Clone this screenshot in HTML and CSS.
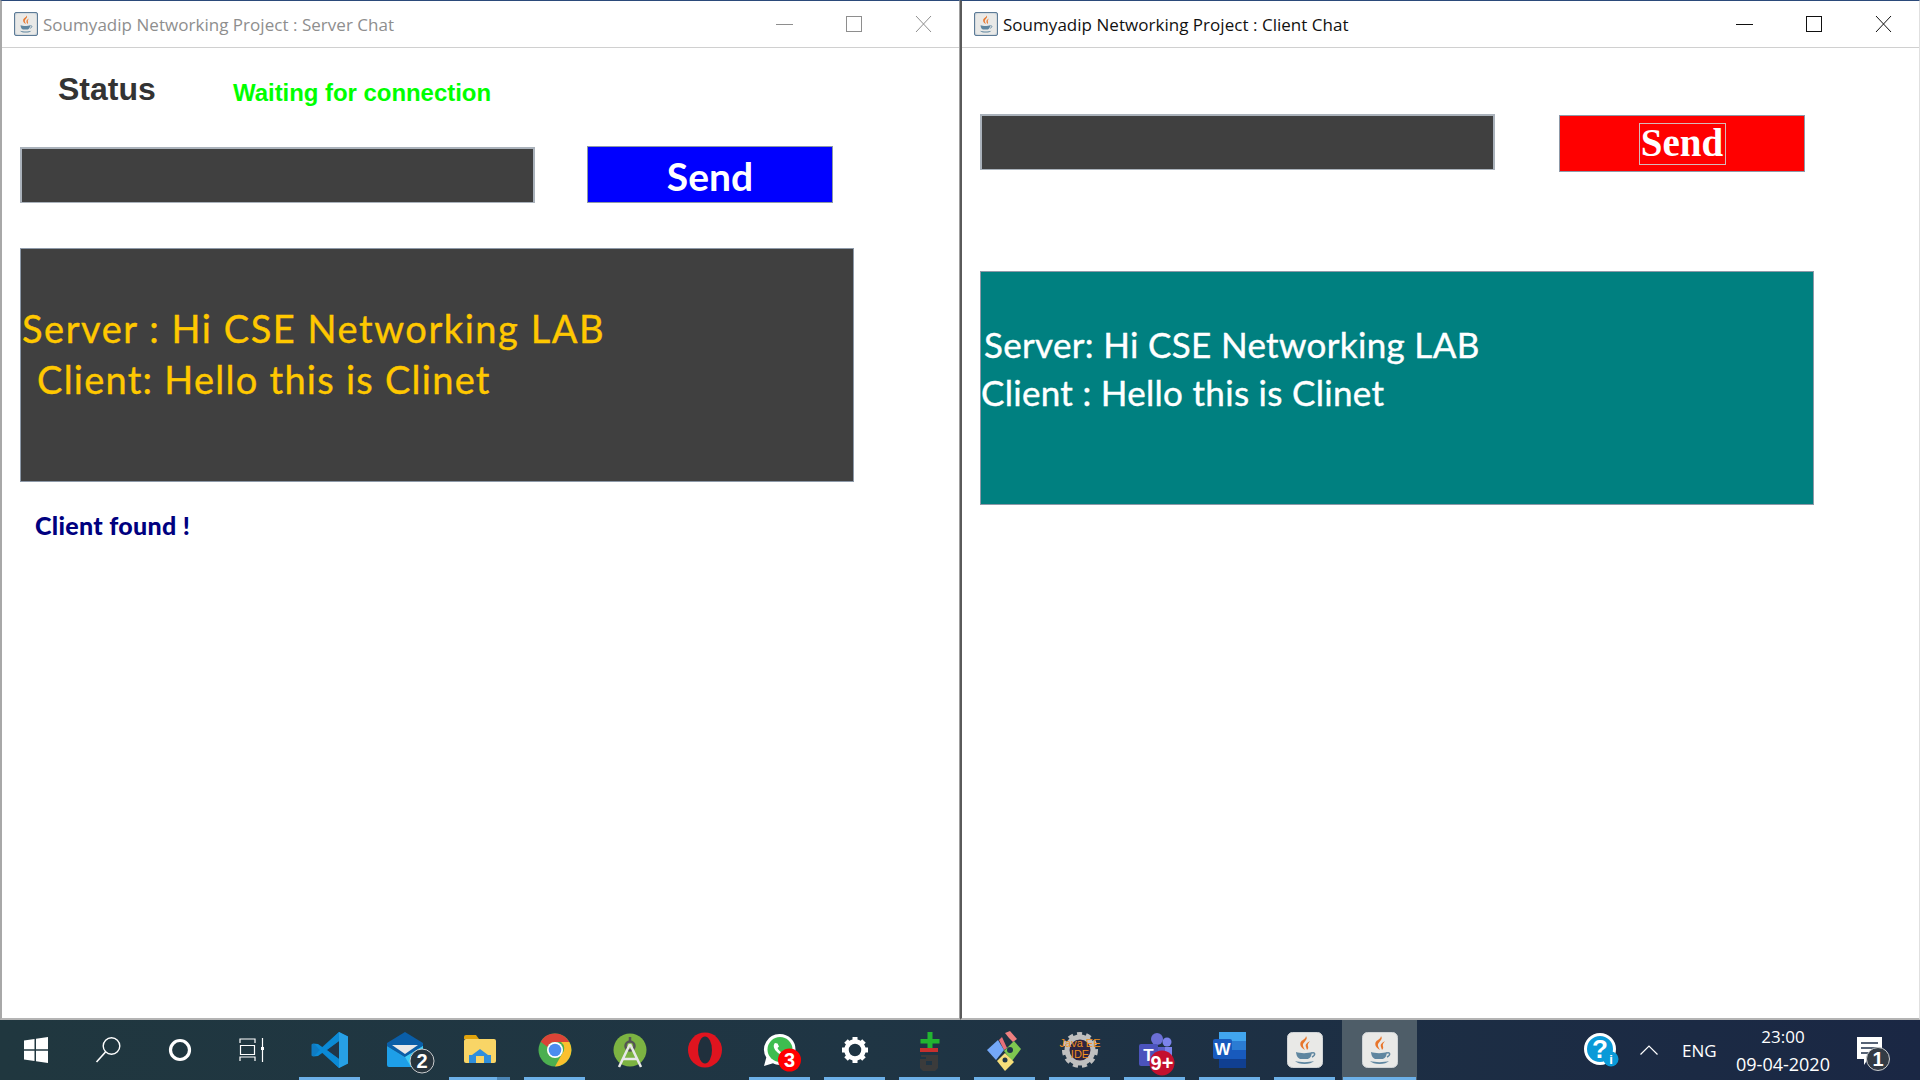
FILE: index.html
```html
<!DOCTYPE html>
<html lang="en">
    <head>
        <title>Soumyadip Networking Project</title>
        <link rel="stylesheet" href="styles.css">
    </head>
    <body>
        <svg class="defs" width="0" height="0">
            <symbol id="java" viewBox="0 0 36 36">
                <rect x="0.5" y="0.5" width="35" height="35" rx="5" fill="#e9e9e7" stroke="#cfd3d6"/>
                <path d="M19 4c3 4-4 6-3 10 .4 1.500 1.500 3 2 4-3-2-5.500-4-4.500-7.500C14.500 8 19 7 19 4z" fill="#e8762c"/>
                <path d="M23 9c-3 2-5 3-4 6 .3 1 .8 2 1 3 2-2 1-3 .8-4.500-.2-1.500 1-3 2.200-4.500z" fill="#e8762c"/>
                <path d="M9 20c4 1.500 12 1.500 16 0v1c-1 4-2 5-4 6h-8c-2-1-3.500-2.500-4-7z" fill="#5f86a0"/>
                <path d="M25 21c3-1 4 2 0 4" fill="none" stroke="#5f86a0" stroke-width="1.500"/>
                <path d="M8 29c5 1.500 14 1.500 19 0-2 2-5 3-9.500 3S10 31 8 29z" fill="#5f86a0"/>
            </symbol>
        </svg>

        <div class="desktop">
            <div class="window server">
                <div class="title-bar">
                    <svg class="title-icon" width="24" height="24"><use href="#java"/></svg>
                    <span class="title-text">Soumyadip Networking Project : Server Chat</span>
                    <div class="window-buttons">
                        <svg width="17" height="16" viewBox="0 0 17 16"><path d="M0 8.500h17" stroke="currentColor"/></svg>
                        <svg width="16" height="16" viewBox="0 0 16 16"><rect x="0.500" y="0.500" width="15" height="15" fill="none" stroke="currentColor"/></svg>
                        <svg width="17" height="16" viewBox="0 0 17 16"><path d="M1 0l15 16M16 0L1 16" stroke="currentColor" fill="none"/></svg>
                    </div>
                </div>
                <div class="status-row">
                    <span class="status-label">Status</span>
                    <span class="status-value">Waiting for connection</span>
                </div>
                <div class="send-row">
                    <div class="message-input"></div>
                    <div class="send-button blue"><span>Send</span></div>
                </div>
                <div class="chat-box dark">
                    <div class="chat-line server-first">Server : Hi CSE Networking LAB</div>
                    <div class="chat-line server-second">Client: Hello this is Clinet</div>
                </div>
                <div class="found">Client found !</div>
            </div>

            <div class="window client">
                <div class="title-bar">
                    <svg class="title-icon" width="24" height="24"><use href="#java"/></svg>
                    <span class="title-text">Soumyadip Networking Project : Client Chat</span>
                    <div class="window-buttons">
                        <svg width="17" height="16" viewBox="0 0 17 16"><path d="M0 8.500h17" stroke="currentColor"/></svg>
                        <svg width="16" height="16" viewBox="0 0 16 16"><rect x="0.500" y="0.500" width="15" height="15" fill="none" stroke="currentColor"/></svg>
                        <svg width="17" height="16" viewBox="0 0 17 16"><path d="M1 0l15 16M16 0L1 16" stroke="currentColor" fill="none"/></svg>
                    </div>
                </div>
                <div class="send-row">
                    <div class="message-input"></div>
                    <div class="send-button red"><span>Send</span></div>
                </div>
                <div class="chat-box teal">
                    <div class="chat-line client-first">Server: Hi CSE Networking LAB</div>
                    <div class="chat-line client-second">Client : Hello this is Clinet</div>
                </div>
            </div>
        </div>

        <div class="taskbar">
            <div class="system-item">
                <svg class="icon" width="48" height="48" viewBox="0 0 48 48"><path d="M12 14.500l10.500-1.500v10.300H12zM24 12.800L36 11v12.300H24zM12 24.700h10.500V35L12 33.500zM24 24.700h12V37l-12-1.800z" fill="#fff"/></svg>
            </div>
            <div class="system-item">
                <svg class="icon" width="48" height="48" viewBox="0 0 48 48"><circle cx="27.500" cy="20" r="8.300" fill="none" stroke="#fff" stroke-width="1.400"/><path d="M21.500 26L12.500 36" stroke="#fff" stroke-width="1.600"/></svg>
            </div>
            <div class="system-item">
                <svg class="icon" width="48" height="48" viewBox="0 0 48 48"><circle cx="24" cy="24" r="9.500" fill="none" stroke="#fff" stroke-width="3.200"/></svg>
            </div>
            <div class="system-item last">
                <svg class="icon" width="48" height="48" viewBox="0 0 48 48"><path d="M12 17v-4h15v4M12 35v-4h15v4M12.500 19.500h14v9h-14zM34.500 12v24" fill="none" stroke="#fff" stroke-width="1.200"/><rect x="33" y="21" width="3" height="3" fill="#fff"/></svg>
            </div>

            <div class="app open">
                <svg class="icon" width="48" height="48" viewBox="0 0 48 48"><path d="M33 6l9 4.500v27L33 42 14 25l-7 5.500-1.500-1V18.500l1.500-1L14 23z" fill="#0f7cc4"/><path d="M33 6l9 4.500v27L33 42z" fill="#27a0e6"/><path d="M33 15L21 24l12 9z" fill="#20364a"/><path d="M33 6v9L12 30l-5 .5 26-24.500z" fill="#0b8ad6"/><path d="M33 42v-9L12 18l-5-.5 26 24.500z" fill="#0b8ad6"/></svg>
            </div>
            <div class="app">
                <svg class="icon" width="48" height="48" viewBox="0 0 48 48"><path d="M6 17L24 6l18 11v3L24 31 6 20z" fill="#0a5ea8"/><path d="M11 19h26l-13 9z" fill="#e8e8e8"/><path d="M6 20l18 11 18-11v19a2 2 0 0 1-2 2H8a2 2 0 0 1-2-2z" fill="#1e9fe8"/><path d="M42 20v19a2 2 0 0 1-2 2H30l-6-10z" fill="#3ecbf5"/><circle cx="41" cy="35" r="12" fill="#27343d" stroke="#c9ccce"/><text class="badge-number" x="41" y="42" font-size="20">2</text></svg>
            </div>
            <div class="app open stacked">
                <svg class="icon" width="48" height="48" viewBox="0 0 48 48"><path d="M8 11a2 2 0 0 1 2-2h10l3 4H8z" fill="#e0a30c"/><rect x="8" y="13" width="32" height="24" rx="2" fill="#f9d566"/><path d="M13 37V29l3 0 8-6 8 6 3 0v8h-7v-7H20v7z" fill="#2f8fdc"/><path d="M20 37V33h8v4z" fill="#f9d566"/></svg>
            </div>
            <div class="app open">
                <svg class="icon" width="48" height="48" viewBox="0 0 48 48"><circle cx="24" cy="24" r="16.500" fill="#4caf50"/><path d="M24 7.500A16.500 16.500 0 0 1 38.300 16H24a8 8 0 0 0-7.500 5L9.700 15.700A16.500 16.500 0 0 1 24 7.500z" fill="#db4437"/><path d="M38.300 16A16.500 16.500 0 0 1 24 40.500L31 28a8 8 0 0 0-1-12z" fill="#fbc02d"/><circle cx="24" cy="24" r="8" fill="#fff"/><circle cx="24" cy="24" r="6.300" fill="#4a8cf0"/></svg>
            </div>
            <div class="app">
                <svg class="icon" width="48" height="48" viewBox="0 0 48 48"><circle cx="24" cy="24" r="16.500" fill="#7cb342"/><circle cx="24" cy="20" r="4.500" fill="none" stroke="#555" stroke-width="2.500"/><path d="M24 11v5" stroke="#555" stroke-width="2.500"/><path d="M24 18L13 41M24 18l11 23M16 33h16" stroke="#e8e8e8" stroke-width="2.500" fill="none"/></svg>
            </div>
            <div class="app">
                <svg class="icon" width="48" height="48" viewBox="0 0 48 48"><ellipse cx="24" cy="24" rx="17" ry="17.500" fill="#e0141f"/><ellipse cx="24" cy="24" rx="7" ry="13.500" fill="#20303d"/></svg>
            </div>
            <div class="app open">
                <svg class="icon" width="48" height="48" viewBox="0 0 48 48"><path d="M24 8a15.500 15.500 0 0 1 0 31c-2.700 0-5-.6-7-1.700L8 40l2.300-8.500A15.500 15.500 0 0 1 24 8z" fill="#fff"/><circle cx="24" cy="23.500" r="12.500" fill="#3ebd50"/><path d="M19 17c-2 2-1.500 5 1 8s6 5 8.500 4.500c1.500-.3 2.500-2 2-3l-3-1.500-1.500 1.500c-2-.7-4-3-4.500-4.500l1.500-1.500-1.500-3z" fill="#fff"/><circle cx="33.500" cy="34" r="11.500" fill="#f00"/><text class="badge-number" x="33.500" y="41" font-size="20">3</text></svg>
            </div>
            <div class="app open">
                <svg class="icon" width="48" height="48" viewBox="0 0 48 48"><circle cx="24" cy="24" r="8.500" fill="none" stroke="#fff" stroke-width="4.500"/><g stroke="#fff" stroke-width="5"><path d="M24 11v4M24 33v4M11 24h4M33 24h4M15 15l2.500 2.500M30.500 30.500L33 33M33 15l-2.500 2.500M17.500 30.500L15 33"/></g></svg>
            </div>
            <div class="app open">
                <svg class="icon" width="48" height="48" viewBox="0 0 48 48"><path d="M21.500 6h5v7h7v4.500h-7V24h-5v-6.500h-7V13h7z" fill="#22b530"/><rect x="14" y="22" width="18" height="4" fill="#c8302e"/><path d="M15 29h17v13l-3 3H17l-3-3v-9h6v6h6v-4h-6v-4h-5z" fill="#3b3b3b"/></svg>
            </div>
            <div class="app open">
                <svg class="icon" width="48" height="48" viewBox="0 0 48 48"><path d="M24 7l5-2 7 8-4 3-4-4z" fill="#f08080"/><path d="M18 14l3-3 5 11-3 2z" fill="#e8707a"/><path d="M23 25l10-10 7 8-9 12z" fill="#7ec850"/><path d="M17 14l6 10-8 10-9-10z" fill="#74a8f8"/><path d="M16 35l8-8 9 9-9 9z" fill="#f6de7a"/><circle cx="29" cy="24" r="3" fill="#20364a"/><circle cx="24" cy="34" r="2.500" fill="#20364a"/></svg>
            </div>
            <div class="app open">
                <svg class="icon" width="48" height="48" viewBox="0 0 48 48"><circle cx="24" cy="24" r="13" fill="#2e2440" stroke="#bfbfbf" stroke-width="5"/><circle cx="24" cy="24" r="16" fill="none" stroke="#bfbfbf" stroke-width="4" stroke-dasharray="5 4"/><text class="java-ee" x="24" y="21">Java EE</text><text class="java-ee" x="24" y="32">IDE</text></svg>
            </div>
            <div class="app open">
                <svg class="icon" width="48" height="48" viewBox="0 0 48 48"><circle cx="26" cy="13" r="6" fill="#6b6fd6"/><circle cx="36" cy="16" r="4.500" fill="#7b83eb"/><path d="M18 21h16v14H18z" fill="#5a5fc8"/><path d="M34 21h7v11h-7z" fill="#7b83eb"/><rect x="8" y="18" width="19" height="22" rx="2" fill="#4b53bc"/><text class="teams-letter" x="17.500" y="35">T</text><circle cx="31" cy="37" r="12.500" fill="#c4102e"/><text class="badge-number" x="31" y="44" font-size="20">9+</text></svg>
            </div>
            <div class="app open">
                <svg class="icon" width="48" height="48" viewBox="0 0 48 48"><rect x="13" y="6" width="27" height="36" rx="2" fill="#2b7cd3"/><rect x="13" y="6" width="27" height="9" fill="#41a5ee"/><rect x="13" y="24" width="27" height="9" fill="#185abd"/><rect x="13" y="33" width="27" height="9" fill="#103f91"/><rect x="7" y="13" width="19" height="20" rx="2" fill="#185abd"/><text class="word-letter" x="16.500" y="29">W</text></svg>
            </div>
            <div class="app open">
                <svg class="icon" width="36" height="36"><use href="#java"/></svg>
            </div>
            <div class="app open active">
                <svg class="icon" width="36" height="36"><use href="#java"/></svg>
            </div>

            <div class="tray">
                <svg class="icon tray-help" width="48" height="48" viewBox="0 0 48 48"><circle cx="22" cy="23" r="14.500" fill="#0a9ad8" stroke="#fff" stroke-width="3"/><text class="help-mark" x="22" y="32">?</text><circle cx="33" cy="33" r="7.500" fill="#0a9ad8"/><text class="help-info" x="33" y="38">i</text></svg>
                <svg class="tray-chevron" width="18" height="10" viewBox="0 0 18 10"><path d="M0.500 9.500L9 1l8.500 8.500" fill="none" stroke="#fff" stroke-width="1.200"/></svg>
                <span class="tray-lang">ENG</span>
                <div class="clock">
                    <span>23:00</span>
                    <span class="clock-date">09-04-2020</span>
                </div>
                <svg class="icon tray-note" width="48" height="48" viewBox="0 0 48 48"><path d="M13 11h25v22H24l-4 6v-6h-7z" fill="#fff"/><path d="M17 17h17M17 22h17M17 27h12" stroke="#20304a" stroke-width="1.500"/><circle cx="34" cy="33" r="11.500" fill="#333b45" stroke="#c9ccce"/><text class="badge-number" x="34" y="40" font-size="20">1</text></svg>
            </div>
        </div>
    </body>
</html>
```

FILE: styles.css
```css
html, body {
    margin: 0;
    padding: 0;
    height: 100%;
    overflow: hidden;
}
body {
    display: flex;
    flex-direction: column;
    width: 1920px;
    height: 1080px;
    background-color: #fff;
    font-family: "Liberation Sans", sans-serif;
}
.defs {
    position: absolute;
}

.desktop {
    display: flex;
    height: 1020px;
}
.window {
    box-sizing: border-box;
    width: 960px;
    height: 1020px;
    background-color: #fff;
    border-top: 1px solid #2b4a7a;
    border-left: 2px solid #a8a8a8;
    border-bottom: 2px solid #b4b4b4;
    border-right: 1px solid #a0a0a0;
}
.window.client {
    border-left-color: #5a5a5a;
    border-right-color: #e0e0e0;
}

.title-bar {
    display: flex;
    align-items: center;
    height: 46px;
    border-bottom: 1px solid #d0d0d0;
    padding-left: 12px;
}
.title-icon {
    box-sizing: border-box;
    background-color: #b9c8d6;
    border: 1px solid #5d7b96;
    border-radius: 2px;
}
.title-text {
    margin-left: 5px;
    font-family: "Open Sans", sans-serif;
    font-size: 17px;
    letter-spacing: 0.03px;
}
.window-buttons {
    display: flex;
    align-items: center;
    margin-left: auto;
    gap: 53px;
    padding-right: 27px;
}
.server .title-text,
.server .window-buttons {
    color: #8e8e8e;
}
.client .title-text,
.client .window-buttons {
    color: #111;
}

.status-row {
    display: flex;
    align-items: flex-start;
    height: 78px;
    padding-left: 56px;
}
.status-label {
    margin-top: 23px;
    width: 175px;
    font-size: 32px;
    font-weight: bold;
    color: #333;
}
.status-value {
    margin-top: 31px;
    font-size: 24px;
    font-weight: bold;
    letter-spacing: -0.05px;
    color: #00ff00;
}

.send-row {
    display: flex;
    margin: 20px 0 0 18px;
}
.client .send-row {
    margin-top: 66px;
}
.message-input {
    box-sizing: border-box;
    width: 515px;
    height: 56px;
    margin-top: 1px;
    background-color: #404040;
    border: 2px solid #aab2bb;
    border-bottom-width: 1px;
}
.client .message-input {
    margin-top: 0;
}
.send-button {
    box-sizing: border-box;
    display: flex;
    align-items: center;
    justify-content: center;
    width: 246px;
    height: 57px;
    margin-left: 52px;
    border: 1px solid #8d99a8;
    color: #fff;
}
.blue {
    padding-top: 2px;
    background-color: #0000ff;
    font-family: "Lato", sans-serif;
    font-size: 39px;
    font-weight: bold;
}
.red {
    margin: 1px 0 0 64px;
    background-color: #ff0000;
    font-family: "Liberation Serif", serif;
    font-size: 39px;
    font-weight: bold;
}
.red span {
    box-sizing: border-box;
    display: block;
    width: 87px;
    height: 42px;
    line-height: 38px;
    text-align: center;
    border: 1px solid #d8b8b8;
}

.chat-box {
    box-sizing: border-box;
    width: 834px;
    height: 234px;
    margin: 45px 0 0 18px;
    border: 1px solid #8d99a8;
    font-family: "Lato", sans-serif;
}
.client .chat-box {
    margin-top: 99px;
}
.dark {
    background-color: #404040;
    color: #ffc800;
}
.teal {
    background-color: #008080;
    color: #fff;
}
.chat-line {
    white-space: nowrap;
    -webkit-text-stroke: 0.4px currentColor;
}
.server-first {
    margin-top: 53px;
    padding-left: 1px;
    font-size: 38px;
    line-height: 52px;
    letter-spacing: 1.55px;
}
.server-second {
    padding-left: 16px;
    font-size: 38px;
    line-height: 50px;
    letter-spacing: 1.25px;
}
.client-first {
    margin-top: 48px;
    padding-left: 3px;
    font-size: 35px;
    line-height: 48px;
    letter-spacing: 0.33px;
}
.client-second {
    font-size: 35px;
    line-height: 48px;
    letter-spacing: 0.3px;
}
.found {
    margin: 28px 0 0 33px;
    font-family: "Lato", sans-serif;
    font-size: 25px;
    font-weight: 900;
    letter-spacing: 0.3px;
    color: #00007f;
}

.taskbar {
    display: flex;
    align-items: stretch;
    height: 60px;
    background: linear-gradient(to right, #20373f, #1f3544 45%, #1a2744);
}
.system-item {
    display: flex;
    align-items: center;
    justify-content: center;
    width: 72px;
}
.system-item.last {
    margin-right: 4px;
}
.app {
    box-sizing: border-box;
    display: flex;
    align-items: center;
    justify-content: center;
    width: 75px;
    position: relative;
}
.app.open::after {
    content: "";
    position: absolute;
    left: 7px;
    right: 7px;
    bottom: 0;
    height: 3px;
    background-color: #6cb0e8;
}
.app.stacked::after {
    background: linear-gradient(to right, #6cb0e8 78%, #4b85b5 78%);
}
.app.active {
    background-color: #4e5d68;
}
.app.active::after {
    left: 1px;
    right: 1px;
}
.icon {
    overflow: visible;
}

.tray {
    display: flex;
    align-items: center;
    margin-left: auto;
    color: #fff;
    font-family: "Open Sans", sans-serif;
}
.tray-help {
    margin-right: 14px;
}
.tray-chevron {
    margin-right: 24px;
}
.tray-lang {
    width: 46px;
    font-size: 17px;
}
.clock {
    display: flex;
    flex-direction: column;
    align-items: center;
    gap: 5px;
    width: 110px;
    margin-right: 6px;
    font-size: 17px;
    line-height: 23px;
}
.clock-date {
    font-size: 18px;
}
.tray-note {
    margin: 0 28px 0 0;
}

.badge-number {
    fill: #fff;
    font-family: "Liberation Sans", sans-serif;
    font-weight: bold;
    text-anchor: middle;
}
.java-ee {
    fill: #f09020;
    font-family: "Liberation Sans", sans-serif;
    font-size: 11px;
    text-anchor: middle;
}
.teams-letter,
.word-letter {
    fill: #fff;
    font-family: "Liberation Sans", sans-serif;
    font-size: 17px;
    font-weight: bold;
    text-anchor: middle;
}
.help-mark {
    fill: #fff;
    font-family: "Liberation Sans", sans-serif;
    font-size: 26px;
    font-weight: bold;
    text-anchor: middle;
}
.help-info {
    fill: #fff;
    font-family: "Liberation Sans", sans-serif;
    font-size: 13px;
    font-weight: bold;
    text-anchor: middle;
}
```
